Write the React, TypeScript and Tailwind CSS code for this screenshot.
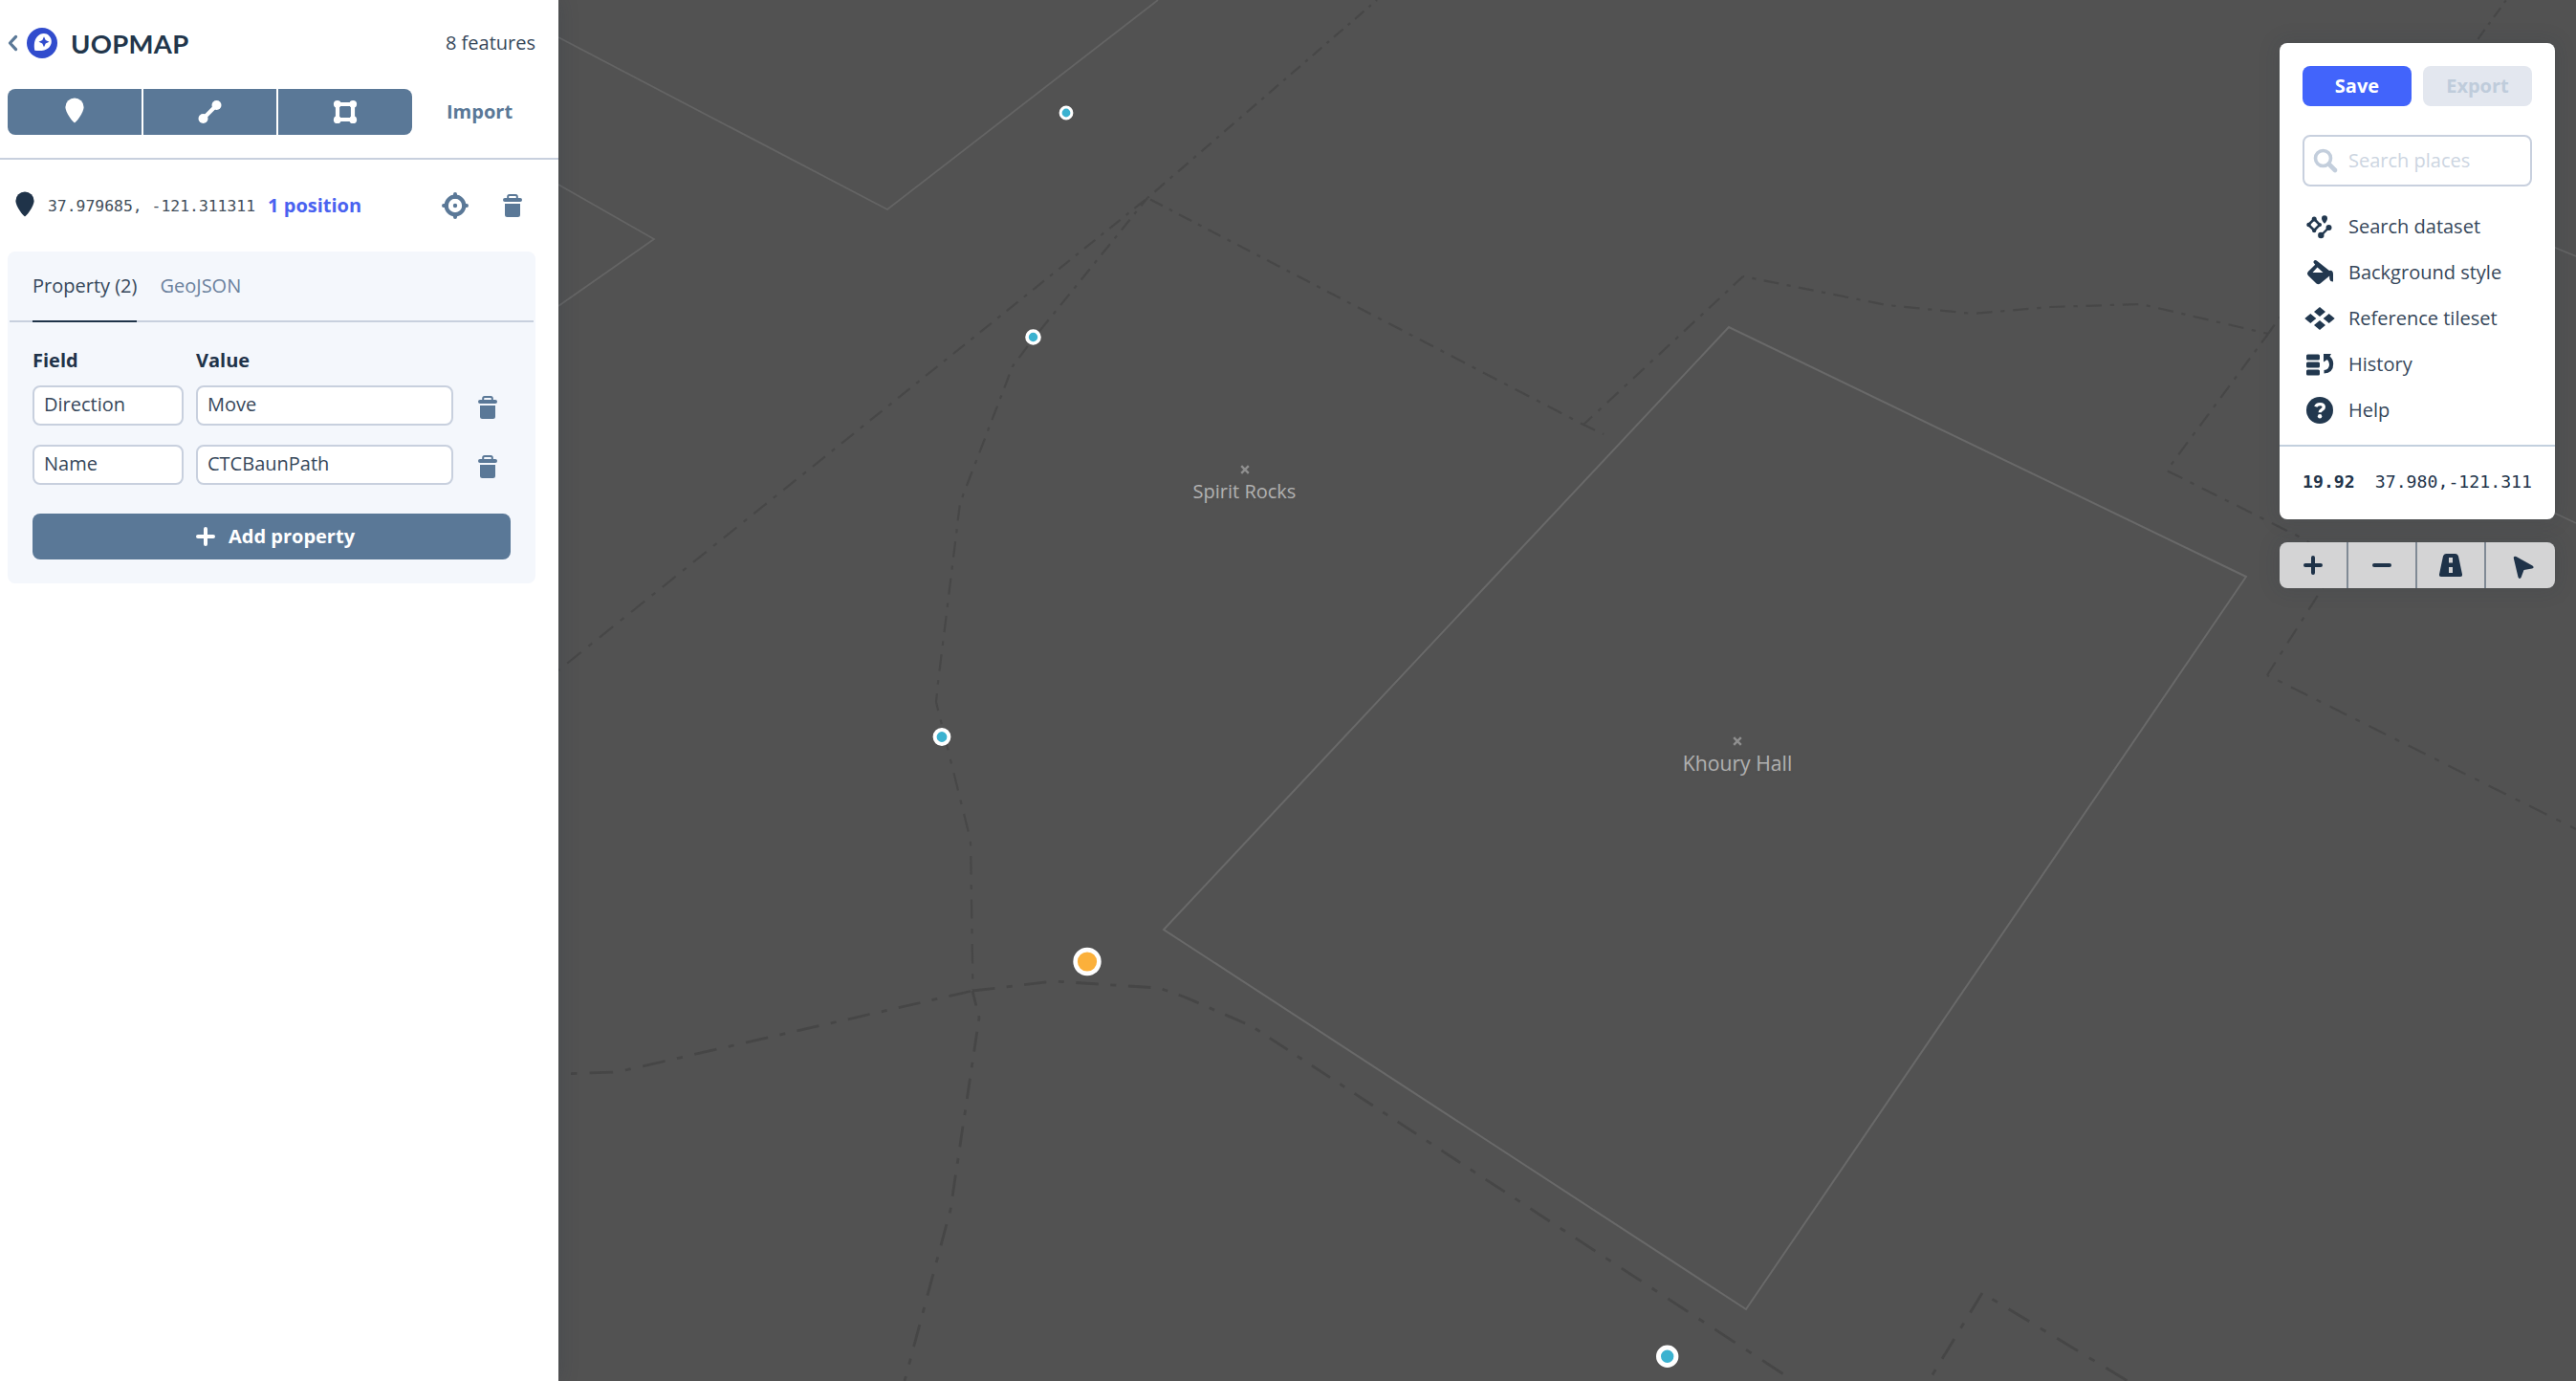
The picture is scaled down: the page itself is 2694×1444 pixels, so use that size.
import React from "react";

type Pt = [number, number];

const PATTERN: [number, boolean][] = [
  [0.43, true],
  [0.23, false],
  [0.11, true],
  [0.23, false],
];

/* Dash-dot path whose period grows with y, as on a tilted map. */
function dashPath(points: Pt[], phase = 0): string {
  let d = "";
  let t = phase;
  for (let i = 0; i < points.length - 1; i++) {
    const [x0, y0] = points[i];
    const [x1, y1] = points[i + 1];
    const len = Math.hypot(x1 - x0, y1 - y0);
    const ux = (x1 - x0) / len;
    const uy = (y1 - y0) / len;
    let s = 0;
    while (s < len - 0.01) {
      let edge = 0;
      let on = true;
      for (const [f, v] of PATTERN) {
        edge += f;
        if (t < edge - 1e-6) {
          on = v;
          break;
        }
      }
      const y = y0 + uy * s;
      const period = (31 + 0.0235 * y) * (1 - 0.13 * Math.abs(uy));
      const step = Math.min((edge - t) * period, len - s);
      if (on) {
        d += `M${(x0 + ux * s).toFixed(1)} ${(y0 + uy * s).toFixed(1)}L${(x0 + ux * (s + step)).toFixed(1)} ${(y0 + uy * (s + step)).toFixed(1)}`;
      }
      s += step;
      t += step / period;
      if (t >= 1 - 1e-6) t = 0;
    }
  }
  return d;
}

const upperPaths = [
  dashPath([[1200, 207], [584, 701]], 0.9),
  dashPath([[1200, 207], [1440, 0]], 0.7),
  dashPath([[1200, 207], [1080, 355], [1059, 383], [1004, 526], [981, 714], [979, 734], [1015, 879], [1017.5, 1035]], 0.1),
  dashPath([[1200, 207], [1656, 444], [1677, 454]], 0.9),
  dashPath([[1656, 444], [1823, 289], [1973, 319], [2063, 328], [2144, 321], [2239, 318], [2372, 349]], 0.1),
  dashPath([[2372, 349], [2600, 29], [2621, 0]], 0.1),
  dashPath([[2372, 349], [2266, 492], [2410, 564], [2446, 588], [2371, 706], [2694, 867]], 0.1),
];

const lowerPaths = [
  dashPath([[584, 1123], [645, 1121], [1017, 1036]], 0.43),
  dashPath([[1017, 1036], [1102, 1026], [1212, 1033], [1240, 1043], [1309, 1073], [1876, 1444]], 0),
  dashPath([[1017, 1036], [1024, 1064], [994, 1265], [946, 1444]], 0.1),
  dashPath([[2073, 1352], [2017, 1444]], 0),
  dashPath([[2073, 1352], [2225, 1444]], 0.45),
];

function MapLines() {
  return (
    <svg className="absolute inset-0" width="2694" height="1444" viewBox="0 0 2694 1444" fill="none">
      <g stroke="#646464" strokeWidth="1.8">
        <path d="M584 39L928 219L1211 0" />
        <path d="M584 193L684 250L584 320" />
        <path d="M2660 254L2694 268M2660 531L2694 547" />
      </g>
      <path d="M1217 972L1808 342L2349 603L1826 1369Z" stroke="#696969" strokeWidth="2" />
      <g stroke="#474747" strokeWidth="2.2">
        {upperPaths.map((d, i) => (
          <path key={i} d={d} />
        ))}
      </g>
      <g stroke="#464646" strokeWidth="2.8">
        {lowerPaths.map((d, i) => (
          <path key={i} d={d} />
        ))}
      </g>
      <circle cx="1115" cy="118" r="5.9" fill="#3bb2d0" stroke="#fff" strokeWidth="3" />
      <circle cx="1080.5" cy="352.5" r="6.5" fill="#3bb2d0" stroke="#fff" strokeWidth="3.6" />
      <circle cx="985" cy="770.5" r="7.4" fill="#3bb2d0" stroke="#fff" strokeWidth="4" />
      <circle cx="1137" cy="1005.5" r="12.4" fill="#fbb03b" stroke="#fff" strokeWidth="4.6" />
      <circle cx="1743.7" cy="1418.2" r="9.2" fill="#3bb2d0" stroke="#fff" strokeWidth="5" />
    </svg>
  );
}

function MapLabel({ className, children }: { className: string; children: string }) {
  return (
    <div className={`absolute flex w-40 -translate-x-1/2 flex-col items-center gap-[3px] text-[#b0b0b0] [text-shadow:0_0_2px_#555,0_0_3px_#5c5c5c] ${className}`}>
      <svg width="10" height="10" viewBox="0 0 10 10">
        <path d="M1.2 1.2l7.6 7.6M8.8 1.2L1.2 8.8" stroke="#8f8f8f" strokeWidth="2.4" />
      </svg>
      <span className="whitespace-nowrap">{children}</span>
    </div>
  );
}

const PIN = "M18 29.2C16.6 29.2 8.4 18.6 8.4 12.9A9.6 9.4 0 0 1 27.6 12.9C27.6 18.6 19.4 29.2 18 29.2Z";

function Icon({ children, className = "" }: { children: React.ReactNode; className?: string }) {
  return (
    <svg className={`shrink-0 ${className}`} width="36" height="36" viewBox="0 0 36 36" fill="currentColor">
      {children}
    </svg>
  );
}

function Trash({ className = "" }: { className?: string }) {
  return (
    <Icon className={className}>
      <path d="M13.2 11V8.6Q13.2 7 14.8 7h6.4Q22.8 7 22.8 8.6V11" fill="none" stroke="currentColor" strokeWidth="2" />
      <rect x="8" y="10" width="20" height="4" rx="2" />
      <path d="M10 16h16v11.5a2.5 2.5 0 0 1-2.5 2.5h-11A2.5 2.5 0 0 1 10 27.500Z" />
    </Icon>
  );
}

function Plus() {
  return (
    <Icon>
      <path d="M18 10V26M10 18H26" stroke="currentColor" strokeWidth="4" strokeLinecap="round" />
    </Icon>
  );
}

function PropertyRow({ field, value }: { field: string; value: string }) {
  return (
    <div className="flex h-[42px] items-center">
      <div className="mr-[13px] flex h-[42px] w-[158px] items-center rounded-lg border-2 border-[#c8d0de] bg-white pl-2.5 pb-0.5">{field}</div>
      <div className="flex h-[42px] w-[269px] items-center rounded-lg border-2 border-[#c8d0de] bg-white pl-2.5 pb-0.5">{value}</div>
      <Trash className="mt-[4px] ml-[18px] text-[#5a7897]" />
    </div>
  );
}

function Sidebar() {
  return (
    <aside className="relative z-10 h-full w-[584px] shrink-0 bg-white shadow-[0_0_20px_rgba(31,51,73,0.2)]">
      <header className="h-[167px] border-b-2 border-[#c8d0de]">
        <div className="flex h-[93px] items-center pl-2">
          <svg width="11" height="18" viewBox="0 0 11 18" className="-mt-[3px] mr-[9px]">
            <path d="M8.600 2.400L2.400 9L8.600 15.600" fill="none" stroke="#5a7897" strokeWidth="3.200" strokeLinecap="round" strokeLinejoin="round" />
          </svg>
          <svg width="32" height="32" viewBox="0 0 32 32" className="-mt-[3px]">
            <circle cx="16" cy="16" r="16" fill="#314ccd" />
            <path d="M8.300 23.700C7.400 18.500 7.600 13 10.800 9.400C14.300 5.500 20 4.800 23.400 8.400C27 12 26.500 17.800 22.600 21.200C19 24.300 13.400 24.500 8.300 23.700Z" fill="#fff" />
            <path d="M18 9.200L19.700 13L23.500 14.700L19.700 16.400L18 20.200L16.300 16.400L12.500 14.700L16.300 13Z" fill="#314ccd" />
          </svg>
          <h1 className="-mt-[2px] ml-[14px] font-[Lato] text-[27.500px] leading-none font-bold tracking-[0.300px] text-[#22364b]">UOPMAP</h1>
          <span className="mr-6 -mt-1 ml-auto">8 features</span>
        </div>
        <div className="flex items-center pl-2">
          <div className="flex h-12 w-[423px] gap-0.5 overflow-hidden rounded-lg text-white">
            <button className="flex w-[140px] items-center justify-center bg-[#5a7897]">
              <Icon>
                <path d={PIN} />
              </Icon>
            </button>
            <button className="flex w-[139px] items-center justify-center bg-[#5a7897]">
              <Icon>
                <path d="M10.500 25L24.500 11" stroke="currentColor" strokeWidth="4" />
                <circle cx="10.500" cy="25" r="5" />
                <circle cx="24.500" cy="11" r="5" />
              </Icon>
            </button>
            <button className="flex w-[140px] items-center justify-center bg-[#5a7897]">
              <Icon>
                <rect x="10" y="10" width="16" height="16" rx="2" fill="none" stroke="currentColor" strokeWidth="4.200" />
                <circle cx="9.800" cy="9.800" r="3.900" />
                <circle cx="26.200" cy="9.800" r="3.900" />
                <circle cx="9.800" cy="26.200" r="3.900" />
                <circle cx="26.200" cy="26.200" r="3.900" />
              </Icon>
            </button>
          </div>
          <span className="ml-9 font-bold text-[#5a7897]">Import</span>
        </div>
      </header>

      <div className="flex h-24 items-center pl-2">
        <Icon className="text-[#1f3349]">
          <path d={PIN} />
        </Icon>
        <span className="mt-[2px] ml-1.5 font-['DejaVu_Sans_Mono',monospace] text-[16.400px] text-[#424e5a]">37.979685, -121.311311</span>
        <span className="ml-[13px] font-bold text-[#4a62f0]">1 position</span>
        <Icon className="mr-6 ml-auto text-[#5a7897]">
          <circle cx="18" cy="18" r="9.300" fill="none" stroke="currentColor" strokeWidth="4.200" />
          <path d="M18 6v3M18 27v3M6 18h3M27 18h3" stroke="currentColor" strokeWidth="4" strokeLinecap="round" />
          <circle cx="18" cy="18" r="2.200" />
        </Icon>
        <Trash className="mr-[30px] text-[#5a7897]" />
      </div>

      <section className="ml-2 h-[347px] w-[552px] rounded-lg bg-[#f4f7fc]">
        <div className="mx-0.5 flex h-[74px] gap-6 border-b-2 border-[#c8d0de] pl-6">
          <div className="mb-[-2px] flex items-center border-b-2 border-[#1f3349]">Property (2)</div>
          <div className="flex items-center text-[#6b819d]">GeoJSON</div>
        </div>
        <div className="px-[26px] pt-6">
          <div className="flex h-[42px] items-center pb-[11px] font-bold text-[#1f3349]">
            <span className="w-[171px]">Field</span>
            <span>Value</span>
          </div>
          <div className="flex flex-col gap-5">
            <PropertyRow field="Direction" value="Move" />
            <PropertyRow field="Name" value="CTCBaunPath" />
          </div>
          <button className="mt-[30px] flex h-12 w-[500px] items-center justify-center rounded-lg bg-[#5a7897] font-bold text-white">
            <Plus />
            <span className="ml-1.5">Add property</span>
          </button>
        </div>
      </section>
    </aside>
  );
}

function MenuItem({ icon, label }: { icon: React.ReactNode; label: string }) {
  return (
    <li className="flex h-12 items-center gap-3">
      <Icon className="text-[#22384f]">{icon}</Icon>
      <span className="-mt-px">{label}</span>
    </li>
  );
}

function ControlPanel() {
  return (
    <div className="h-[498px] rounded-lg bg-white shadow-[0_0_20px_4px_rgba(31,51,73,0.1)]">
      <div className="flex gap-3 px-6 pt-6 font-bold">
        <button className="h-[42px] w-[114px] rounded-lg bg-[#4264fb] text-white">Save</button>
        <button className="h-[42px] w-[114px] rounded-lg bg-[#e3e7ef] text-[#bfccdb]">Export</button>
      </div>
      <div className="mx-6 mt-[30px] flex h-[54px] items-center rounded-lg border-2 border-[#c8d0de] pl-1 text-[#ccd5e1]">
        <Icon>
          <circle cx="15.500" cy="15.500" r="8" fill="none" stroke="#c3cedc" strokeWidth="3.600" />
          <path d="M21.500 21.500L28 28" stroke="#c3cedc" strokeWidth="4.600" strokeLinecap="round" />
        </Icon>
        <span className="ml-1.5">Search places</span>
      </div>
      <ul className="mt-[18px] px-6">
        <MenuItem
          label="Search dataset"
          icon={
            <>
              <path d="M12.200 10L18 16L12.200 22L6.200 16Z" fill="none" stroke="currentColor" strokeWidth="2.600" />
              <circle cx="12.200" cy="10" r="2.500" />
              <circle cx="18" cy="16" r="2" />
              <circle cx="12.200" cy="22" r="2.200" />
              <circle cx="6.500" cy="16" r="2.200" />
              <path d="M23 14.800C21.500 13.500 20 11.500 20 9.300A3 3 0 0 1 26 9.300C26 11.500 24.500 13.500 23 14.800Z" />
              <path d="M19.500 27L27.500 19" stroke="currentColor" strokeWidth="2.400" />
              <circle cx="19.300" cy="27" r="3.200" />
              <circle cx="27.500" cy="19" r="3" />
            </>
          }
        />
        <MenuItem
          label="Background style"
          icon={
            <>
              <path d="M11.500 7.500A2 2 0 0 1 14.800 5.600L28 16Q31.800 15 32 19.500V27.500Q28.500 27.500 28.200 24V21.500L18.500 29.500Q16.500 31 14.500 29.500L5.800 21Q4 19 5.800 17L13.200 9.800ZM15.500 12.500L10.500 18H21.500Z" fillRule="evenodd" />
            </>
          }
        />
        <MenuItem
          label="Reference tileset"
          icon={
            <>
              <path d="M18 6L24 11L18 16L12 11Z" />
              <path d="M18 20L24 25L18 30L12 25Z" />
              <path d="M8.300 13L14.300 18L8.300 23L2.300 18Z" />
              <path d="M27.700 13L33.700 18L27.700 23L21.700 18Z" />
            </>
          }
        />
        <MenuItem
          label="History"
          icon={
            <>
              <rect x="4" y="7.500" width="14" height="6" rx="1.500" />
              <rect x="4" y="15.500" width="14" height="6" rx="1.500" />
              <rect x="4" y="23.500" width="14" height="6" rx="1.500" />
              <path d="M22 7H30L28.500 9.500Q32.200 12.500 32.200 17.500Q32.200 27 22.500 27.500V24Q28 23.500 28 18Q28 15 25.800 13L22 15.500Z" />
            </>
          }
        />
        <MenuItem
          label="Help"
          icon={
            <>
              <circle cx="18" cy="18" r="14" />
              <path d="M13.800 14.300C14.500 12.200 16 11.600 18.200 11.600C20.700 11.600 22.300 12.800 22.300 14.700C22.300 17.600 18.200 17.300 18.200 20.300" fill="none" stroke="#fff" strokeWidth="3.400" />
              <circle cx="18.100" cy="24.300" r="2.200" fill="#fff" />
            </>
          }
        />
      </ul>
      <div className="mt-3 flex h-[78px] items-center justify-between border-t-2 border-[#c3d0de] px-6 pb-0.5 font-['DejaVu_Sans_Mono',monospace] text-[18.200px] text-[#22344a]">
        <span className="font-bold">19.92</span>
        <span>37.980,-121.311</span>
      </div>
    </div>
  );
}

function ZoomBar() {
  return (
    <div className="mt-6 flex h-12 overflow-hidden rounded-lg bg-[#d4d4d5] text-[#1f3349] shadow-[0_0_20px_4px_rgba(31,51,73,0.1)]">
      <button className="flex w-[72px] items-center justify-center border-r-2 border-[#808a95]">
        <Icon>
          <path d="M18 10V26M10 18H26" stroke="currentColor" strokeWidth="4" strokeLinecap="round" />
        </Icon>
      </button>
      <button className="flex w-[72px] items-center justify-center border-r-2 border-[#808a95]">
        <Icon>
          <path d="M10 18H26" stroke="currentColor" strokeWidth="4" strokeLinecap="round" />
        </Icon>
      </button>
      <button className="flex w-[72px] items-center justify-center border-r-2 border-[#808a95]">
        <Icon>
          <path d="M13 6H23Q25.300 6 26 8.500L30 27.500Q30.300 30 28 30H8Q5.700 30 6 27.500L10 8.500Q10.700 6 13 6ZM16 10v5.500h4V10ZM16 20v6h4v-6Z" fillRule="evenodd" />
        </Icon>
      </button>
      <button className="flex w-[72px] items-center justify-center">
        <Icon className="ml-2">
          <path d="M7 11.500Q6 8 9.500 9L26.500 18.500Q29 20.500 26 21.600L17.500 23L14.500 31Q12.500 33 11.500 30.500Z" />
        </Icon>
      </button>
    </div>
  );
}

export default function App() {
  return (
    <div className="relative flex h-[1444px] w-[2694px] overflow-hidden bg-[#525252] font-['Open_Sans',sans-serif] text-[20px] leading-[30px] text-[#36475a]">
      <div className="absolute inset-0">
        <MapLines />
        <MapLabel className="top-[486px] left-[1301.500px] text-[20px]">Spirit Rocks</MapLabel>
        <MapLabel className="top-[770px] left-[1817px] text-[21.200px]">Khoury Hall</MapLabel>
      </div>
      <Sidebar />
      <div className="relative mt-[45px] mr-[22px] ml-auto w-[288px]">
        <ControlPanel />
        <ZoomBar />
      </div>
    </div>
  );
}
